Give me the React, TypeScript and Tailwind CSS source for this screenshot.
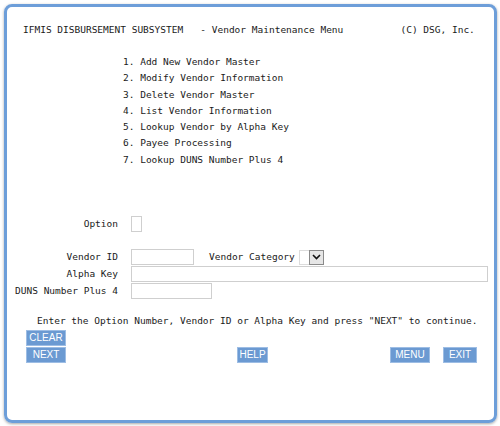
import React from 'react';

const mono = { fontFamily: '"DejaVu Sans Mono", "Liberation Mono", monospace' };

const menuItems = [
  '1. Add New Vendor Master',
  '2. Modify Vendor Information',
  '3. Delete Vendor Master',
  '4. List Vendor Information',
  '5. Lookup Vendor by Alpha Key',
  '6. Payee Processing',
  '7. Lookup DUNS Number Plus 4',
];

function Btn({ label, className = '' }: { label: string; className?: string }) {
  return (
    <button
      className={`h-[16px] bg-[#6b9ad2] border border-[#9dbde4] text-white text-[10px] leading-none font-['Liberation_Sans',Arial,sans-serif] ${className}`}
    >
      {label}
    </button>
  );
}

export default function App() {
  return (
    <div className="w-[500px] h-[426px] bg-white pt-1 pl-1">
      <div
        className="w-[493px] h-[419px] border-[3px] border-[#6d9ed9] rounded-[8px] shadow-[0_1px_3px_rgba(0,0,0,0.35)] text-[9.5px] text-[#1a1a1a]"
        style={mono}
      >
        {/* Header */}
        <div className="pt-[15px] pl-[16px] h-[31px] leading-[16px] whitespace-pre">
          {'IFMIS DISBURSEMENT SUBSYSTEM   - Vendor Maintenance Menu          (C) DSG, Inc.'}
        </div>

        {/* Menu */}
        <div className="mt-[16px] pl-[116px] leading-[16.3px]">
          {menuItems.map((m) => (
            <div key={m} className="whitespace-pre">
              {m}
            </div>
          ))}
        </div>

        {/* Option */}
        <div className="mt-[48px] flex items-center h-[16px]">
          <div className="w-[111px] text-right">Option</div>
          <div className="ml-[13px] w-[11px] h-[16px] border border-[#cfcfcf]" />
        </div>

        {/* Vendor fields */}
        <div className="mt-[17px] flex flex-col gap-[1px]">
          <div className="flex items-center h-[16px]">
            <div className="w-[111px] text-right">Vendor ID</div>
            <div className="ml-[13px] w-[63px] h-[16px] border border-[#cfcfcf]" />
            <div className="ml-[15px]">Vendor Category</div>
            <div className="ml-[4px] flex h-[15px] w-[25px]">
              <div className="w-[10px] h-full border border-[#dcdcdc] border-r-0" />
              <div className="flex-1 h-full border border-[#8a8a8a] bg-[#e6e6e6] flex items-center justify-center">
                <svg width="9" height="6" viewBox="0 0 9 6">
                  <path d="M1 1 L4.5 4.5 L8 1" stroke="#111" strokeWidth="1.6" fill="none" />
                </svg>
              </div>
            </div>
          </div>
          <div className="flex items-center h-[16px]">
            <div className="w-[111px] text-right">Alpha Key</div>
            <div className="ml-[13px] w-[357px] h-[16px] border border-[#cfcfcf]" />
          </div>
          <div className="flex items-center h-[16px]">
            <div className="w-[111px] text-right whitespace-pre">DUNS Number Plus 4</div>
            <div className="ml-[13px] w-[81px] h-[16px] border border-[#cfcfcf]" />
          </div>
        </div>

        {/* Instructions */}
        <div className="mt-[14px] pl-[30px] leading-[16px] whitespace-pre">
          {'Enter the Option Number, Vendor ID or Alpha Key and press "NEXT" to continue.'}
        </div>

        {/* Buttons */}
        <div className="pl-[19px] mt-[1px] flex flex-col gap-[1px]">
          <div className="flex">
            <Btn label="CLEAR" className="w-[40px]" />
          </div>
          <div className="flex">
            <Btn label="NEXT" className="w-[40px]" />
            <Btn label="HELP" className="w-[31px] ml-[171px]" />
            <Btn label="MENU" className="w-[40px] ml-[122px]" />
            <Btn label="EXIT" className="w-[34px] ml-[13px]" />
          </div>
        </div>
      </div>
    </div>
  );
}
